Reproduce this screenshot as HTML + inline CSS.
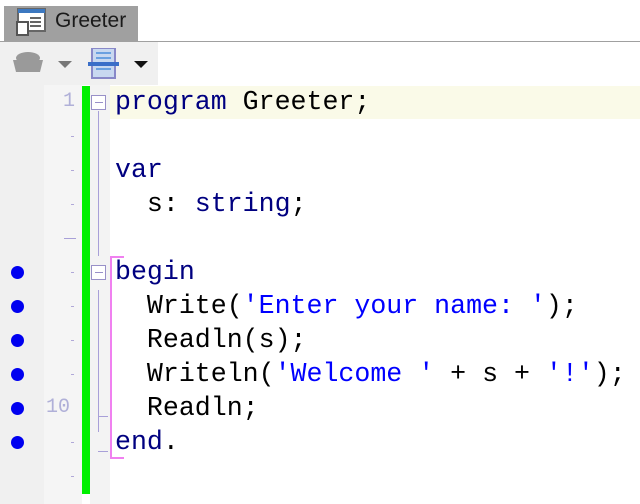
<!DOCTYPE html>
<html><head><style>
*{margin:0;padding:0;box-sizing:border-box}
body{width:640px;height:504px;overflow:hidden;background:#fff;position:relative;font-family:"Liberation Sans",sans-serif}
.a{position:absolute}
.code{font-family:"Liberation Mono",monospace;font-size:26.6px;line-height:34px;white-space:pre;color:#000}
.k{color:#000080}.s{color:#0000ff}
.dot{width:13px;height:13px;border-radius:50%;background:#0000f0;left:11px}
.tick{width:3px;height:1px;background:#b0a8d8;left:71px}
</style></head><body>
<div class="a" style="left:0;top:0;width:640px;height:41px;background:#fff"></div>
<div class="a" style="left:4;top:6px;left:4px;width:134px;height:35px;background:#a0a0a0"></div>
<svg class="a" style="left:16px;top:8px" width="32" height="30">
<rect x="2" y="1" width="27" height="22" fill="#fff" stroke="#666" stroke-width="2"/>
<rect x="2" y="1" width="27" height="4" fill="#3c78c0"/>
<line x1="14" y1="10" x2="25" y2="10" stroke="#666" stroke-width="2"/>
<line x1="14" y1="14" x2="25" y2="14" stroke="#666" stroke-width="2"/>
<line x1="14" y1="18" x2="25" y2="18" stroke="#666" stroke-width="2"/>
<rect x="1" y="14" width="11" height="13" fill="#fff" stroke="#555" stroke-width="2"/>
</svg>
<div class="a" style="left:55px;top:9px;font-size:21px;color:#1a1a1a">Greeter</div>
<div class="a" style="left:0;top:41px;width:640px;height:1px;background:#a0a0a0"></div>
<div class="a" style="left:0;top:42px;width:158px;height:43px;background:#f0f0f0"></div>
<svg class="a" style="left:10px;top:48px" width="150" height="32">
<ellipse cx="18" cy="10" rx="12" ry="6" fill="#999"/>
<path d="M3 12 L33 12 L30 24 L6 24 Z" fill="#9a9a9a"/>
<path d="M48 13 L62 13 L55 20 Z" fill="#777"/>
<rect x="82" y="0" width="23" height="30" fill="#c8d8f0" stroke="#8888c8" stroke-width="2"/>
<line x1="86" y1="5" x2="101" y2="5" stroke="#6aa0e0" stroke-width="2"/>
<line x1="86" y1="10" x2="101" y2="10" stroke="#6aa0e0" stroke-width="2"/>
<line x1="86" y1="21" x2="101" y2="21" stroke="#6aa0e0" stroke-width="2"/>
<rect x="78" y="14" width="31" height="4" fill="#3a6ec8"/>
<path d="M124 13 L138 13 L131 20 Z" fill="#111"/>
</svg>
<div class="a" style="left:0;top:85px;width:44px;height:419px;background:#f0f0f0"></div>
<div class="a" style="left:44px;top:85px;width:38px;height:419px;background:#f5f5f5"></div>
<div class="a" style="left:82px;top:86px;width:8px;height:408px;background:#00f000"></div>
<div class="a" style="left:90px;top:85px;width:20px;height:419px;background:#f3f3f3"></div>
<div class="a" style="left:110px;top:86px;width:530px;height:33px;background:#fafae8"></div>
<div class="a code" style="left:63px;top:85px;color:#b0b0d8;font-size:20px">1</div>
<div class="a code" style="left:46px;top:391px;color:#b0b0d8;font-size:20px">10</div>
<div class="a tick" style="top:136px"></div><div class="a tick" style="top:170px"></div><div class="a tick" style="top:204px"></div>
<div class="a" style="left:64px;top:238px;width:12px;height:1px;background:#a8a0d8"></div>
<div class="a tick" style="top:272px"></div><div class="a tick" style="top:306px"></div><div class="a tick" style="top:340px"></div><div class="a tick" style="top:374px"></div><div class="a tick" style="top:442px"></div><div class="a tick" style="top:476px"></div>
<div class="a dot" style="top:266px"></div><div class="a dot" style="top:300px"></div><div class="a dot" style="top:334px"></div><div class="a dot" style="top:368px"></div><div class="a dot" style="top:402px"></div><div class="a dot" style="top:436px"></div>
<div class="a" style="left:91px;top:95px;width:15px;height:15px;border:1px solid #9890c8;background:#fff"></div>
<div class="a" style="left:95px;top:102px;width:8px;height:1px;background:#9890c8"></div>
<div class="a" style="left:98px;top:111px;width:1px;height:145px;background:#a8a0d8"></div>
<div class="a" style="left:91px;top:265px;width:15px;height:15px;border:1px solid #9890c8;background:#fff"></div>
<div class="a" style="left:95px;top:272px;width:8px;height:1px;background:#9890c8"></div>
<div class="a" style="left:98px;top:290px;width:1px;height:142px;background:#a8a0d8"></div>
<div class="a" style="left:98px;top:416px;width:10px;height:1px;background:#a8a0d8"></div>
<div class="a" style="left:98px;top:451px;width:10px;height:1px;background:#a8a0d8"></div>
<div class="a" style="left:110px;top:256px;width:14px;height:203px;border:2px solid #f080f0;border-right:none"></div>
<div class="a code" style="left:115px;top:85px"><span class="k">program</span> Greeter;

<span class="k">var</span>
  s: <span class="k">string</span>;

<span class="k">begin</span>
  Write(<span class="s">'Enter your name: '</span>);
  Readln(s);
  Writeln(<span class="s">'Welcome '</span> + s + <span class="s">'!'</span>);
  Readln;
<span class="k">end</span>.</div>
</body></html>
